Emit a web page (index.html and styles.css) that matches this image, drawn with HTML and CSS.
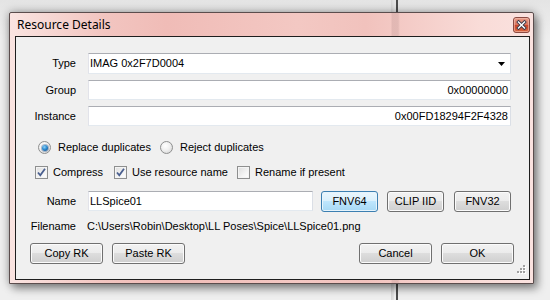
FILE: index.html
```html
<!DOCTYPE html>
<html>
<head>
<meta charset="utf-8">
<link rel="stylesheet" href="styles.css">
</head>
<body>
<div class="window">
  <div class="titlebar">
    <span class="title">Resource Details</span>
    <span class="close">
      <svg width="17" height="16" viewBox="0 0 17 16">
        <defs>
          <linearGradient id="cg" x1="0" y1="0" x2="0" y2="1">
            <stop offset="0" stop-color="#eaa08c"/>
            <stop offset="0.5" stop-color="#d8705a"/>
            <stop offset="0.5" stop-color="#c8442a"/>
            <stop offset="1" stop-color="#d8673f"/>
          </linearGradient>
        </defs>
        <rect x="0.5" y="0.5" width="16" height="15" rx="2.5" fill="url(#cg)" stroke="#8a4a42"/>
        <rect x="1.5" y="1.5" width="14" height="13" rx="1.5" fill="none" stroke="#f3c0b2" stroke-opacity="0.6"/>
        <path d="M5.5 5 L11.5 11 M11.5 5 L5.5 11" stroke="#3a3a4a" stroke-width="3.2" stroke-linecap="square"/>
        <path d="M5.5 5 L11.5 11 M11.5 5 L5.5 11" stroke="#ffffff" stroke-width="1.4" stroke-linecap="square"/>
      </svg>
    </span>
  </div>
  <div class="client">
    <div class="fields">
      <span class="label">Type</span>
      <div class="combo">
        <span>IMAG 0x2F7D0004</span>
        <svg class="arrow" width="7" height="4" viewBox="0 0 7 4"><path d="M0 0 H7 L3.5 4 Z" fill="#000"/></svg>
      </div>
      <span class="label">Group</span>
      <div class="textbox right">0x00000000</div>
      <span class="label">Instance</span>
      <div class="textbox right">0x00FD18294F2F4328</div>
    </div>

    <div class="radios">
      <div class="opt opt-replace"><span class="radio checked"></span><span>Replace duplicates</span></div>
      <div class="opt"><span class="radio"></span><span>Reject duplicates</span></div>
    </div>

    <div class="checks">
      <div class="opt opt-compress"><span class="check on"><svg width="11" height="11" viewBox="0 0 11 11"><path d="M2 5.5 L4.3 8.3 L9 1.8" fill="none" stroke="#4a5f8f" stroke-width="1.8"/></svg></span><span>Compress</span></div>
      <div class="opt opt-usename"><span class="check on"><svg width="11" height="11" viewBox="0 0 11 11"><path d="M2 5.5 L4.3 8.3 L9 1.8" fill="none" stroke="#4a5f8f" stroke-width="1.8"/></svg></span><span>Use resource name</span></div>
      <div class="opt"><span class="check"></span><span>Rename if present</span></div>
    </div>

    <div class="namerow">
      <span class="label">Name</span>
      <div class="textbox name">LLSpice01</div>
      <button class="btn focus fnv64">FNV64</button>
      <button class="btn clip">CLIP IID</button>
      <button class="btn fnv32">FNV32</button>
    </div>

    <div class="filerow">
      <span class="label">Filename</span>
      <span class="path">C:\Users\Robin\Desktop\LL Poses\Spice\LLSpice01.png</span>
    </div>

    <div class="buttons">
      <button class="btn">Copy RK</button>
      <button class="btn">Paste RK</button>
      <span class="spacer"></span>
      <button class="btn">Cancel</button>
      <button class="btn">OK</button>
    </div>

    <svg class="grip" width="11" height="11" viewBox="0 0 11 11">
      <g fill="#ffffff">
        <rect x="9" y="1" width="2" height="2"/>
        <rect x="6" y="4" width="2" height="2"/><rect x="9" y="4" width="2" height="2"/>
        <rect x="3" y="7" width="2" height="2"/><rect x="6" y="7" width="2" height="2"/><rect x="9" y="7" width="2" height="2"/>
      </g>
      <g fill="#a0a0a0">
        <rect x="8" y="0" width="2" height="2"/>
        <rect x="5" y="3" width="2" height="2"/><rect x="8" y="3" width="2" height="2"/>
        <rect x="2" y="6" width="2" height="2"/><rect x="5" y="6" width="2" height="2"/><rect x="8" y="6" width="2" height="2"/>
      </g>
    </svg>
  </div>
</div>
</body>
</html>
```

FILE: styles.css
```css
* { box-sizing: border-box; }
html, body { margin: 0; }
body {
  width: 550px;
  height: 300px;
  overflow: hidden;
  padding: 12px 0 0 9px;
  background:
    linear-gradient(to right,
      transparent 391px, #d6d6d6 391px, #e4e4e4 394px, transparent 394px,
      transparent 396px, #4c4c4c 396px, #4c4c4c 398px, transparent 398px),
    linear-gradient(#e4e4e4, #efefef 40px, #efefef);
  font-family: "Liberation Sans", Arial, sans-serif;
  font-size: 11px;
  color: #000;
}

.window {
  width: 525px;
  height: 272px;
  border: 1px solid #5b4d4d;
  border-radius: 2px 2px 0 0;
  background:
    linear-gradient(to right,
      transparent 381px, rgba(150,110,110,0.18) 382px, rgba(150,110,110,0.18) 388px, transparent 390px),
    linear-gradient(to right, #fae4e1 0%, #f2c5c0 18%, #f0bcb7 30%, #f3c8c3 55%, #f1c2bd 68%, #f9dcd8 90%, #fae2df 100%);
  box-shadow: 0 0 10px rgba(0,0,0,0.35), 4px 5px 9px rgba(0,0,0,0.35);
  padding: 0 3px 3px 5px;
  display: flex;
  flex-direction: column;
}

.titlebar {
  height: 23px;
  display: flex;
  align-items: flex-start;
  justify-content: space-between;
}
.title {
  font-family: "Noto Sans", "Open Sans", sans-serif;
  font-size: 12px;
  line-height: 16px;
  margin: 4px 0 0 2px;
  color: #000;
}
.close {
  display: block;
  width: 17px;
  height: 16px;
  margin-top: 4px;
}
.close svg { display: block; }

.client {
  position: relative;
  flex: 1;
  background: #f0f0f0;
  border: 1px solid #1e1e1e;
  padding: 16px 18px 0 0;
}

.label {
  text-align: right;
  align-self: center;
  line-height: 13px;
}

.fields {
  display: grid;
  grid-template-columns: 60px 423px;
  column-gap: 12px;
  row-gap: 6px;
}

.combo, .textbox {
  height: 20px;
  background: #fff;
  border: 1px solid;
  border-color: #abadb3 #dbdfe6 #e3e9ef #e2e3ea;
  line-height: 18px;
  padding: 0 2px 0 1px;
  white-space: nowrap;
}
.combo {
  height: 21px;
  line-height: 19px;
  display: flex;
  align-items: center;
  justify-content: space-between;
  padding-right: 5px;
}
.arrow { display: block; margin-top: 1px; }
.right { text-align: right; }

.radios, .checks {
  display: flex;
  align-items: center;
  height: 13px;
  line-height: 13px;
}
.radios { margin-top: 15px; padding-left: 22px; }
.checks { margin-top: 12px; padding-left: 19px; }

.opt { display: flex; align-items: center; white-space: nowrap; }
.opt-replace { width: 122px; gap: 7px; }
.radios .opt { gap: 7px; }
.checks .opt { gap: 5px; }
.opt-compress { width: 79px; }
.opt-usename { width: 123px; }

.radio {
  width: 13px;
  height: 13px;
  border-radius: 50%;
  border: 1px solid #8e8f8f;
  background: radial-gradient(circle at 40% 35%, #ffffff 0%, #f0f0f0 45%, #cfcfcf 100%);
  display: flex;
  align-items: center;
  justify-content: center;
}
.radio.checked::after {
  content: "";
  width: 6px;
  height: 6px;
  border-radius: 50%;
  background: radial-gradient(circle at 40% 35%, #8fd0f5 0%, #2c8bd0 45%, #0d3f7a 100%);
  box-shadow: 0 0 0 1px rgba(30,70,120,0.35);
}

.check {
  width: 13px;
  height: 13px;
  border: 1px solid #8e8f8f;
  background: linear-gradient(135deg, #dcdcdc 0%, #f4f4f4 60%, #ffffff 100%);
  box-shadow: inset 0 0 0 1px #f4f4f4;
  display: flex;
  align-items: center;
  justify-content: center;
}
.check svg { display: block; }

.namerow {
  display: flex;
  align-items: flex-start;
  margin-top: 12px;
  height: 21px;
}
.namerow .label { width: 60px; align-self: center; }
.textbox.name { width: 225px; margin-left: 12px; }

.btn {
  width: 57px;
  height: 21px;
  border: 1px solid #707070;
  border-radius: 3px;
  background: linear-gradient(#f2f2f2 0%, #ebebeb 50%, #dddddd 50%, #cfcfcf 100%);
  box-shadow: inset 0 0 0 1px #fbfbfb;
  font-family: "Liberation Sans", Arial, sans-serif;
  font-size: 11px;
  color: #000;
  padding: 0;
  line-height: 19px;
}
.btn.focus {
  border-color: #3c7fb1;
  background: linear-gradient(#eaf6fd 0%, #d9f0fc 50%, #bee6fd 50%, #a7d9f5 100%);
  box-shadow: inset 0 0 0 1px #e6f4fc;
}
.fnv64 { margin-left: 8px; }
.clip { margin-left: 9px; }
.fnv32 { margin-left: 10px; }

.filerow {
  display: flex;
  margin-top: 8px;
  line-height: 13px;
}
.filerow .label { width: 60px; }
.path { margin-left: 11px; white-space: nowrap; }

.buttons {
  display: flex;
  margin-top: 10px;
  padding-left: 14px;
  margin-right: -3px;
  gap: 9px;
}
.buttons .btn { width: 73px; }
.spacer { flex: 1; }

.grip {
  position: absolute;
  right: 3px;
  bottom: 3px;
  display: block;
}
```
